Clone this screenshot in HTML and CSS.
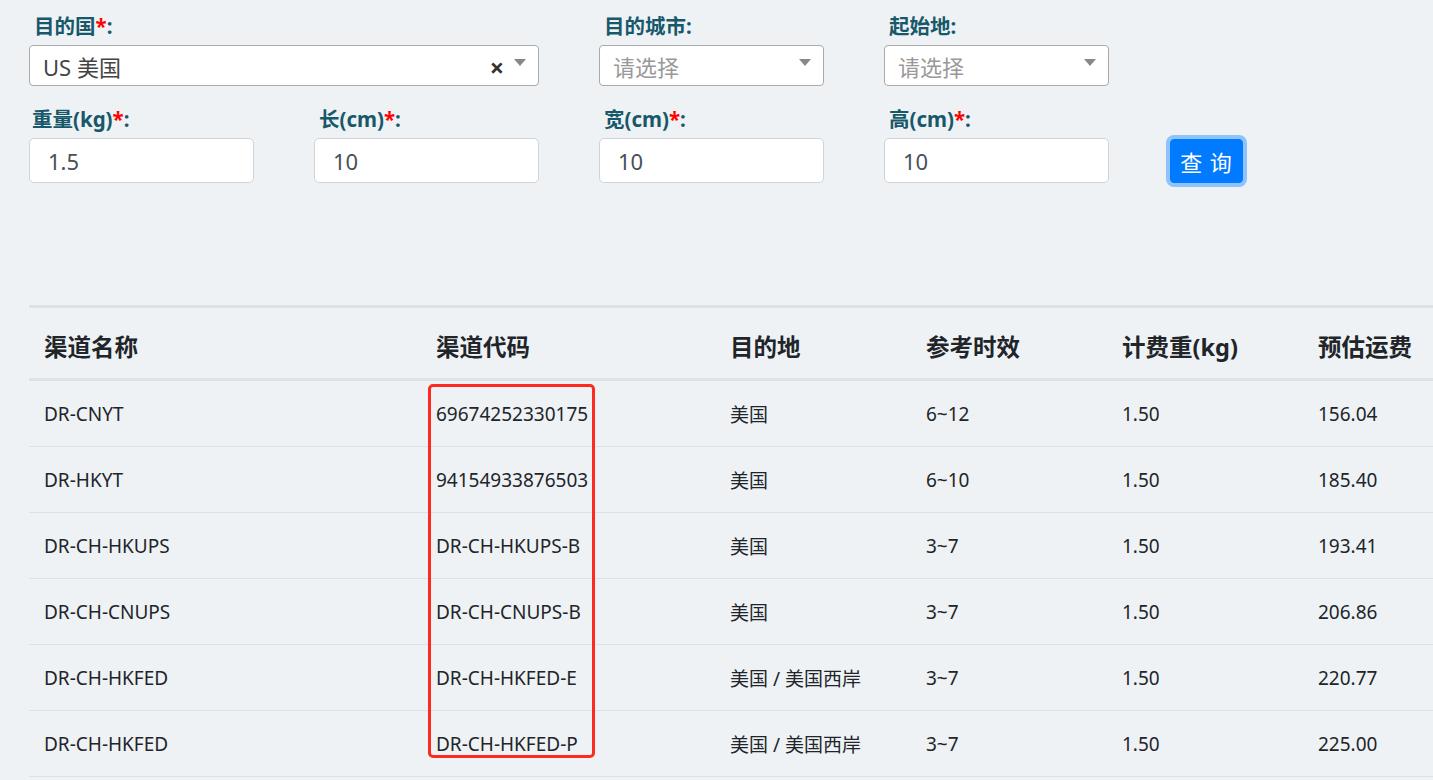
FILE: index.html
```html
<!DOCTYPE html>
<html lang="zh-CN">
<head>
  <meta charset="UTF-8">
  <title>运费查询</title>
  <link rel="stylesheet" href="styles.css">
</head>
<body>
  <div class="page">
    <!-- Query form -->
    <form class="query-form" onsubmit="return false">
      <div class="field span-2">
        <label>目的国<span class="req">*</span>:</label>
        <div class="select">
          <span class="select-value">US 美国</span>
          <span class="select-clear">×</span>
          <span class="select-arrow"></span>
        </div>
      </div>
      <div class="field">
        <label>目的城市:</label>
        <div class="select">
          <span class="select-placeholder">请选择</span>
          <span class="select-arrow"></span>
        </div>
      </div>
      <div class="field">
        <label>起始地:</label>
        <div class="select">
          <span class="select-placeholder">请选择</span>
          <span class="select-arrow"></span>
        </div>
      </div>
      <div class="field-spacer"></div>

      <div class="field">
        <label class="label-tight">重量(kg)<span class="req">*</span>:</label>
        <input type="text" value="1.5">
      </div>
      <div class="field">
        <label>长(cm)<span class="req">*</span>:</label>
        <input type="text" value="10">
      </div>
      <div class="field">
        <label>宽(cm)<span class="req">*</span>:</label>
        <input type="text" value="10">
      </div>
      <div class="field">
        <label>高(cm)<span class="req">*</span>:</label>
        <input type="text" value="10">
      </div>
      <div class="field btn-cell">
        <button type="submit" class="btn-query">查 询</button>
      </div>
    </form>

    <!-- Results -->
    <div class="result-wrap">
      <table class="result-table">
        <thead>
          <tr>
            <th class="col-name">渠道名称</th>
            <th class="col-code">渠道代码</th>
            <th class="col-dest">目的地</th>
            <th class="col-time">参考时效</th>
            <th class="col-weight">计费重(kg)</th>
            <th>预估运费</th>
          </tr>
        </thead>
        <tbody>
          <tr><td>DR-CNYT</td><td>69674252330175</td><td>美国</td><td>6~12</td><td>1.50</td><td>156.04</td></tr>
          <tr><td>DR-HKYT</td><td>94154933876503</td><td>美国</td><td>6~10</td><td>1.50</td><td>185.40</td></tr>
          <tr><td>DR-CH-HKUPS</td><td>DR-CH-HKUPS-B</td><td>美国</td><td>3~7</td><td>1.50</td><td>193.41</td></tr>
          <tr><td>DR-CH-CNUPS</td><td>DR-CH-CNUPS-B</td><td>美国</td><td>3~7</td><td>1.50</td><td>206.86</td></tr>
          <tr><td>DR-CH-HKFED</td><td>DR-CH-HKFED-E</td><td>美国 / 美国西岸</td><td>3~7</td><td>1.50</td><td>220.77</td></tr>
          <tr><td>DR-CH-HKFED</td><td>DR-CH-HKFED-P</td><td>美国 / 美国西岸</td><td>3~7</td><td>1.50</td><td>225.00</td></tr>
        </tbody>
      </table>
      <!-- annotation box over the code column -->
      <div class="highlight-box"></div>
    </div>
  </div>
</body>
</html>
```

FILE: styles.css
```css
body {
  margin: 0;
  background: #eff2f5;
  font-family: "Noto Sans", "Noto Sans CJK SC", sans-serif;
  color: #212529;
  overflow: hidden;
}

.page {
  padding: 11px 0 0 29px;
}

/* form */
.query-form {
  display: grid;
  grid-template-columns: repeat(4, 225px) 140px;
  column-gap: 60px;
  row-gap: 18px;
}

.field {
  display: flex;
  flex-direction: column;
}

.span-2 {
  grid-column: span 2;
}

.field label {
  font-size: 20.5px;
  font-weight: bold;
  color: #17586a;
  padding-left: 5px;
  line-height: 30px;
  margin-bottom: 4px;
}

.field .label-tight {
  padding-left: 3px;
}

.req {
  color: #ff0000;
}

.select {
  height: 41px;
  box-sizing: border-box;
  border: 1px solid #aaaaaa;
  border-radius: 4px;
  background: #fff;
  display: flex;
  align-items: center;
  padding: 0 12px 0 13px;
  font-size: 22px;
}

.select-value {
  flex: 1;
  color: #444;
}

.select-placeholder {
  flex: 1;
  color: #999;
}

.select-clear {
  font-size: 25px;
  font-weight: bold;
  color: #333;
  margin-right: 10px;
  margin-top: 2px;
}

.select-arrow {
  width: 0;
  height: 0;
  border-left: 6px solid transparent;
  border-right: 6px solid transparent;
  border-top: 7px solid #888;
  margin-top: -6px;
}

.field input {
  height: 45px;
  box-sizing: border-box;
  border: 1px solid #ced4da;
  border-radius: 5px;
  background: #fff;
  padding: 0 18px;
  font-family: inherit;
  font-size: 22px;
  color: #495057;
  outline: none;
}

.btn-cell {
  justify-content: flex-end;
}

.btn-query {
  align-self: flex-start;
  width: 73px;
  height: 44px;
  margin: 0 0 0 1px;
  background: #007bff;
  border: 1px solid #007bff;
  border-radius: 4px;
  color: #fff;
  font-family: inherit;
  font-size: 22px;
  letter-spacing: 1px;
  box-shadow: 0 0 0 4px #8ec3fb;
}

/* results */
.result-wrap {
  position: relative;
  margin-top: 122px;
}

.result-table {
  width: 1460px;
  table-layout: fixed;
  border-collapse: collapse;
  border-top: 3px solid #dee2e6;
}

.result-table th {
  text-align: left;
  font-size: 23.5px;
  font-weight: bold;
  padding: 6px 15px 0;
  height: 73px;
  box-sizing: border-box;
  border-bottom: 3px solid #dee2e6;
}

.result-table td {
  font-size: 19px;
  padding: 0 15px;
  height: 65px;
  border-bottom: 1px solid #dee2e6;
  white-space: nowrap;
}

.col-name { width: 392px; }
.col-code { width: 294px; }
.col-dest { width: 196px; }
.col-time { width: 196px; }
.col-weight { width: 196px; }

.highlight-box {
  position: absolute;
  left: 399px;
  top: 79px;
  width: 161px;
  height: 368px;
  border: 3px solid #ff2a1f;
  border-radius: 5px;
}
```
